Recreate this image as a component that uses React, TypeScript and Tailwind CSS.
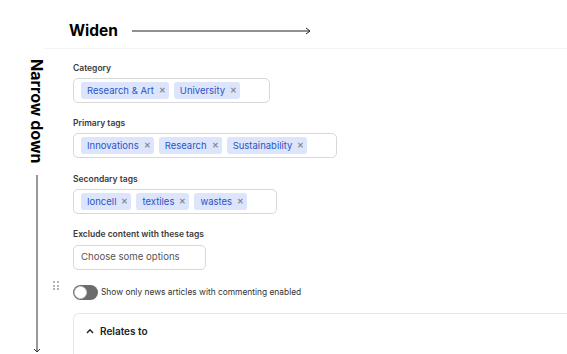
import React from "react";

const Chip = ({ label }: { label: string }) => (
  <span className="inline-flex items-center h-[17px] rounded-[3px] bg-[#dce5fb] pl-[6px] pr-[3px] text-[9.5px] leading-none text-[#2b54c6] whitespace-nowrap">
    <span>{label}</span>
    <span className="ml-[5px] text-[7.5px] font-bold text-[#868b94]">✕</span>
  </span>
);

const TagBox = ({ tags, width }: { tags: string[]; width: string }) => (
  <div className={`flex items-center gap-[5px] h-[25px] pl-[7px] rounded-[5px] border border-[#d8d8d8] bg-white ${width}`}>
    {tags.map((t) => (
      <Chip key={t} label={t} />
    ))}
  </div>
);

const Label = ({ children }: { children: React.ReactNode }) => (
  <div className="text-[8.5px] leading-[14px] font-semibold text-[#3a3a3a]">{children}</div>
);

export default function App() {
  return (
    <div
      className="w-[567px] h-[354px] overflow-hidden bg-white text-[#222]"
      style={{ fontFamily: "Inter, 'Noto Sans', sans-serif" }}
    >
      <div className="flex items-center h-[48px] pl-[69px] pt-[14px]">
        <span className="text-[15.5px] font-bold text-black leading-none">Widen</span>
        <svg width="180" height="10" viewBox="0 0 180 10" className="ml-[14px]">
          <line x1="0" y1="5" x2="178" y2="5" stroke="#222" strokeWidth="1" />
          <path d="M174 2 L178 5 L174 8" fill="none" stroke="#222" strokeWidth="1" />
        </svg>
      </div>
      <div className="flex">
        <div className="w-[45px] pl-[28px]">
          <div className="w-[17px] flex flex-col items-center">
            <div
              className="mt-[11px] text-[16px] font-bold text-black leading-none"
              style={{ writingMode: "vertical-rl" }}
            >
              Narrow down
            </div>
            <svg width="10" height="180" viewBox="0 0 10 180" className="mt-[12px]">
              <line x1="5" y1="0" x2="5" y2="177" stroke="#333" strokeWidth="1" />
              <path d="M2 174 L5 177 L8 174" fill="none" stroke="#333" strokeWidth="1" />
            </svg>
          </div>
        </div>
        <div className="flex-1 border-t border-[#f3f3f3] pl-[28px] pt-[12px]">
          <Label>Category</Label>
          <div className="mt-[3px]">
            <TagBox tags={["Research & Art", "University"]} width="w-[197px]" />
          </div>
          <div className="mt-[13px]">
            <Label>Primary tags</Label>
          </div>
          <div className="mt-[3px]">
            <TagBox tags={["Innovations", "Research", "Sustainability"]} width="w-[264px]" />
          </div>
          <div className="mt-[14px]">
            <Label>Secondary tags</Label>
          </div>
          <div className="mt-[3px]">
            <TagBox tags={["Ioncell", "textiles", "wastes"]} width="w-[204px]" />
          </div>
          <div className="mt-[13px]">
            <Label>Exclude content with these tags</Label>
          </div>
          <div className="mt-[4px] flex items-center w-[133px] h-[25px] rounded-[5px] border border-[#d8d8d8] pl-[7px] text-[9.6px] text-[#555]">
            Choose some options
          </div>
          <div className="relative mt-[15px] flex items-center h-[15px]">
            <div className="absolute left-[-20px] top-[-4px] grid grid-cols-2 gap-x-[2px] gap-y-[1.5px]">
              {[0, 1, 2, 3, 4, 5].map((i) => (
                <span key={i} className="w-[2px] h-[2px] rounded-full bg-[#9a9a9a]" />
              ))}
            </div>
            <div className="relative w-[25px] h-[15px] rounded-full bg-[#6c6c6c]">
              <span className="absolute left-[1px] top-[1px] w-[13px] h-[13px] rounded-full bg-white border border-[#cfcfcf]" />
            </div>
            <span className="ml-[3px] text-[8.4px] text-[#333]">Show only news articles with commenting enabled</span>
          </div>
          <div className="mt-[13px] h-[60px] rounded-tl-[6px] border-t border-l border-[#e8e8e8]">
            <div className="flex items-center h-[34px] pl-[12px] gap-[6px]">
              <svg width="8" height="6" viewBox="0 0 8 6">
                <path d="M1 5 L4 1.8 L7 5" fill="none" stroke="#222" strokeWidth="1.4" />
              </svg>
              <span className="text-[10px] font-semibold text-[#222]">Relates to</span>
            </div>
          </div>
        </div>
      </div>
    </div>
  );
}
